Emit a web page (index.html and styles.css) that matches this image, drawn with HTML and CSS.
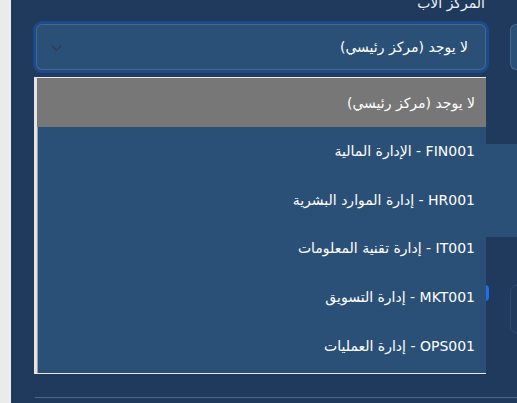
FILE: index.html
```html
<!DOCTYPE html>
<html lang="ar">
<head>
<meta charset="utf-8">
<link rel="stylesheet" href="styles.css">
</head>
<body>
<div class="page">
  <aside class="edge"></aside>
  <main class="panel">
    <div class="fields">
      <div class="field">
        <label class="label">المركز الأب</label>
        <div class="select-wrap">
          <div class="select focused">
            <span class="value">لا يوجد (مركز رئيسي)</span>
            <svg class="chev" width="11" height="6" viewBox="0 0 11 6"><path d="M1 0.8l4.5 4.4 4.5-4.4" fill="none" stroke="#333c48" stroke-width="1.5"/></svg>
          </div>
          <ul class="dropdown">
            <li class="opt active">لا يوجد (مركز رئيسي)</li>
            <li class="opt">FIN001 - الإدارة المالية</li>
            <li class="opt">HR001 - إدارة الموارد البشرية</li>
            <li class="opt">IT001 - إدارة تقنية المعلومات</li>
            <li class="opt">MKT001 - إدارة التسويق</li>
            <li class="opt">OPS001 - إدارة العمليات</li>
          </ul>
        </div>
      </div>
      <div class="field">
        <label class="label">&nbsp;</label>
        <div class="select"></div>
      </div>
    </div>
    <div class="card"></div>
    <div class="fields lower">
      <div class="check-col"><span class="toggle"></span></div>
      <div class="box"></div>
    </div>
    <hr class="rule">
  </main>
</div>
</body>
</html>
```
FILE: styles.css
```css
* { box-sizing: border-box; }
html, body { margin: 0; padding: 0; }
body {
  width: 517px;
  height: 403px;
  overflow: hidden;
  font-family: "DejaVu Sans", sans-serif;
  background: #1f3a5c;
}
.page { display: flex; height: 403px; }
.edge { width: 11px; flex: none; background: #ebebeb; }
.panel {
  flex: 1;
  background: #1f3a5c;
  padding-left: 25px;
  display: flex;
  flex-direction: column;
}
.fields {
  display: grid;
  grid-template-columns: 450px 1fr;
  column-gap: 24px;
}
.field { display: flex; flex-direction: column; }
.label {
  direction: rtl;
  color: #eef2f7;
  font-size: 14px;
  line-height: 16px;
  height: 29px;
  margin-top: -5px;
  padding-right: 1px;
}
.select-wrap { position: relative; }
.select {
  height: 46px;
  background: #2b5078;
  border: 1px solid rgba(255,255,255,0.14);
  border-radius: 6px;
  display: flex;
  align-items: center;
  justify-content: space-between;
  flex-direction: row-reverse;
  padding: 0 17px 0 14px;
}
.select.focused { box-shadow: 0 0 0 3px #1c4a8a; }
.value { direction: rtl; color: #ffffff; font-size: 14px; }
.chev { display: block; margin-top: 1px; }
.dropdown {
  position: absolute;
  top: 53px;
  left: -2px;
  width: 452px;
  height: 297px;
  margin: 0;
  padding: 0 0 4px 0;
  list-style: none;
  background: #2b5078;
  border-top: 1px solid #e8e8e8;
  border-bottom: 1px solid #e8e8e8;
  border-left: 3px solid #e4e4e4;
  box-shadow: inset 1px 0 0 #9a9a9a;
  z-index: 5;
}
.opt {
  direction: rtl;
  height: 48.6px;
  display: flex;
  align-items: center;
  padding-right: 11px;
  color: #ffffff;
  font-size: 14px;
}
.opt.active { background: #777777; height: 49px; }
.card {
  margin-top: 74px;
  height: 93px;
  background: #2b5078;
}
.lower { margin-top: 48px; }
.check-col { display: flex; justify-content: flex-end; }
.toggle {
  width: 16px;
  height: 16px;
  border-radius: 4px;
  background: #1e6ff0;
  margin-right: -3px;
}
.box {
  height: 48px;
  border: 1px solid #2c4a70;
  border-radius: 6px;
  background: #1f3a5c;
}
.rule {
  margin: 64px 0 0 -1px;
  border: none;
  border-top: 1px solid #4d6788;
  height: 0;
}
```
